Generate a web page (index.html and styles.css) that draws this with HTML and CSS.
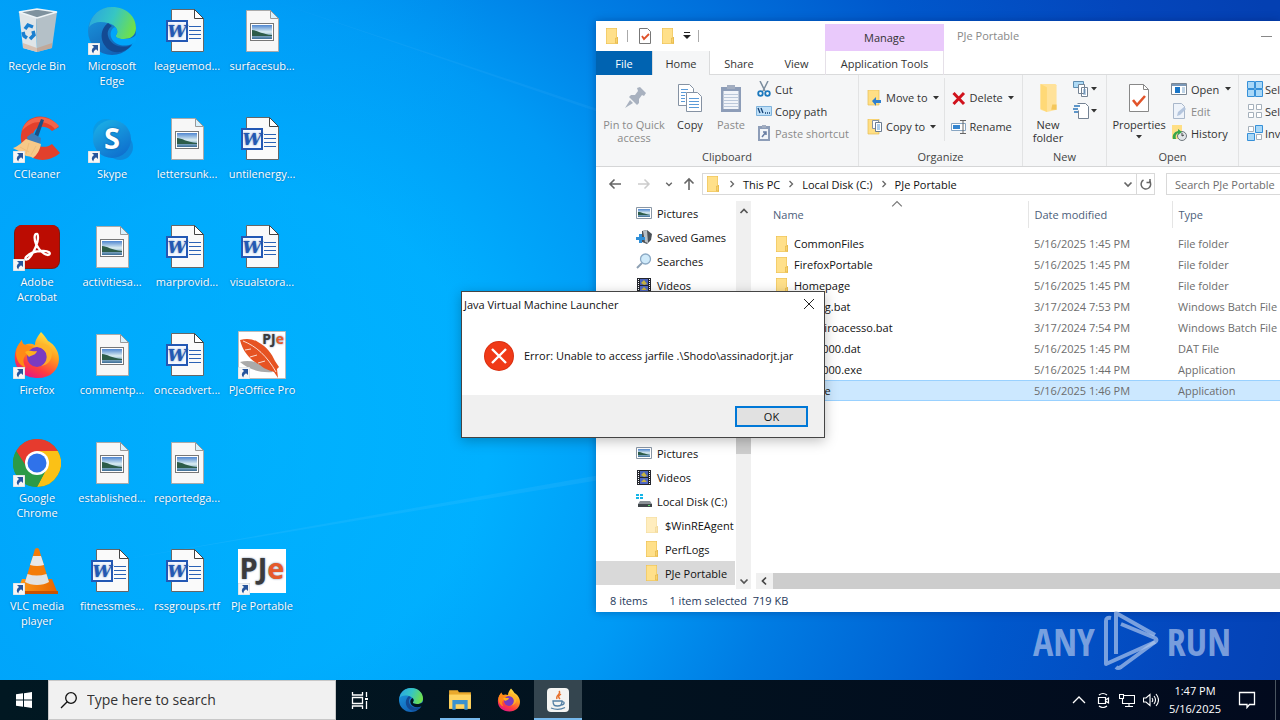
FILE: index.html
```html
<!DOCTYPE html>
<html lang="en">
<head>
<meta charset="utf-8">
<title>Desktop</title>
<link rel="stylesheet" href="styles.css">
</head>
<body>
<svg class="defs" aria-hidden="true">
  <defs>
    <linearGradient id="g-edge1" x1="0" y1="0.2" x2="1" y2="0.5"><stop offset="0" stop-color="#2aa6e0"/><stop offset="0.5" stop-color="#36c6c4"/><stop offset="1" stop-color="#6fe04a"/></linearGradient>
    <linearGradient id="g-edge2" x1="0" y1="0" x2="0.6" y2="1"><stop offset="0" stop-color="#1b9de2"/><stop offset="1" stop-color="#1260b4"/></linearGradient>
    <linearGradient id="g-skype" x1="0" y1="0" x2="0.6" y2="1"><stop offset="0" stop-color="#1cb4e8"/><stop offset="1" stop-color="#0f72cf"/></linearGradient>
    <linearGradient id="g-fox" x1="0.8" y1="0" x2="0.3" y2="1"><stop offset="0" stop-color="#fff04c"/><stop offset="0.4" stop-color="#ffa01e"/><stop offset="0.75" stop-color="#ff3d3f"/><stop offset="1" stop-color="#e3158a"/></linearGradient>
    <linearGradient id="g-sky" x1="0" y1="0" x2="0" y2="1"><stop offset="0" stop-color="#4f86d0"/><stop offset="0.5" stop-color="#dceef2"/><stop offset="0.65" stop-color="#a8c8d8"/><stop offset="1" stop-color="#3a6c96"/></linearGradient>
    <linearGradient id="g-cone" x1="0" y1="0" x2="1" y2="0"><stop offset="0" stop-color="#ff9c1a"/><stop offset="1" stop-color="#e86400"/></linearGradient>
  </defs>
  <symbol id="arrow" viewBox="0 0 12 12"><path d="M0 0h12v12H0z" fill="#f6f6f6" stroke="#b9c4cc" stroke-width=".6"/><path d="M4 2h6v6L8 6.300Q5.500 7.500 5.200 10.500Q2 7 6 4z" fill="#27559c"/></symbol>
  <symbol id="bin" viewBox="0 0 48 48"><path d="M6 5l17 5 1 35-14-4z" fill="#dfe5e8"/><path d="M23 10l21-5-5 36-15 4z" fill="#b4c0c7"/><path d="M6 5l18-3 20 3-20 6z" fill="#7f929e" stroke="#eef4f7" stroke-width="1.500"/><path d="M10 36l14 5v4l-14-4z" fill="#d8c2b4"/><path d="M24 41l15-5v5l-15 4z" fill="#c0a99b"/><g fill="none" stroke="#1a7fd0" stroke-width="3.500"><path d="M12 22l3-4 5 2"/><path d="M20 24l1 4-4 4"/><path d="M14 31l-3-2-1-4"/></g></symbol>
  <symbol id="edge" viewBox="0 0 48 48"><circle cx="24" cy="24" r="24" fill="url(#g-edge2)"/><path d="M1 20C3 8 12 0 24 0c15 0 24 10 24 21 0 8-6 11-12 11-7 0-9-2-8-4 3-3 1-10-8-12C12 14 5 15 1 20z" fill="url(#g-edge1)"/><path d="M20 16c-8 6-9 18 0 26 8 6 18 3 24-4-12 5-22-1-24-9-1-5 1-8 4-10z" fill="#134a93"/><path d="M27 20c3 3 3 6 1 8-1 2 2 4 8 4 5 0 9-1 12-4v6l-4 3c-9 4-19 0-21-7-1-4 0-8 4-10z" fill="var(--hole, #00a5fa)"/></symbol>
  <symbol id="ccleaner" viewBox="0 0 48 48"><path d="M46 12C36-4 10-2 8 20c-2 20 20 34 39 18l-8-9c-8 6-19 2-19-8 0-9 11-13 19-5z" fill="#e2402c"/><path d="M9 16C12 2 32-4 46 11l-4 3C32 3 17 6 9 16z" fill="#f2644a"/><path d="M28 4l3 1-7 20-4-2z" fill="#1d4f83"/><path d="M14 22l5-4 9 5-1 7-11 1z" fill="#3d7db9"/><path d="M0 33c6-2 9-6 13-9l15 5c-1 6-4 11-8 14-5-3-8-1-12-5-2-3-5-3-8-5z" fill="#f6c988"/><path d="M7 32l9 5m0-9l-3 11m10-8l-5 9" stroke="#eebd7c" fill="none"/></symbol>
  <symbol id="skype" viewBox="0 0 48 48"><circle cx="18" cy="17" r="13" fill="#0b9be4"/><circle cx="32" cy="32" r="13" fill="#0d8adc"/><circle cx="24" cy="24" r="19" fill="url(#g-skype)"/></symbol>
  <symbol id="acrobat" viewBox="0 0 48 48"><rect x="1" y="2" width="46" height="44" rx="8" fill="#7d1a10"/><rect x="2" y="2" width="44" height="43" rx="7" fill="#bb0c02"/><path d="M24 11c-3-1-3 5-1 10 3 6 8 11 12 11 4-1 1-5-7-4-6 0-12 3-15 6-2 3 1 4 4 0 4-5 8-14 8-19 0-2 0-4-1-4z" fill="none" stroke="#fff" stroke-width="2.300"/></symbol>
  <symbol id="firefox" viewBox="0 0 48 48"><path d="M28 1c3 3 5 6 7 9 4 2 8 6 10 12 4 13-5 25-20 25C10 47 0 37 2 23c1-6 3-9 7-14 0 3 1 4 3 5 4-2 7-1 10 0 0-5 3-9 6-13z" fill="url(#g-fox)"/><path d="M3 22c0-5 2-8 6-13 0 4 2 5 5 5l9 3c-2 4-6 4-9 6-5 4-4 9-1 14C7 35 3 29 3 22z" fill="#ff8a16"/><circle cx="24" cy="26" r="10" fill="#7a3bc0"/><path d="M17 18c4-3 12-3 16 4 2 6-1 11-5 13 8-1 13-8 10-17-3-6-9-6-15-4z" fill="#ffb52a" opacity=".8"/><path d="M12 21c4-3 7 0 12-1-1 4-5 4-8 6z" fill="#ffb01c"/></symbol>
  <symbol id="chrome" viewBox="0 0 48 48"><circle cx="24" cy="24" r="24" fill="#2c9a48"/><path d="M3.200 12A24 24 0 0 1 44.800 12L24 13 15 30z" fill="#e63b2e"/><path d="M44.800 12A24 24 0 0 1 24 48L33.500 30 24 12z" fill="#fbc116"/><path d="M3.200 12L14 30l10 6 9-5-9 17A24 24 0 0 1 3.200 12z" fill="#2c9a48"/><circle cx="24" cy="24" r="12" fill="#fff"/><circle cx="24" cy="24" r="9.500" fill="#2f72ea"/></symbol>
  <symbol id="vlc" viewBox="0 0 48 48"><path d="M9 32h30l6 15H3z" fill="url(#g-cone)"/><path d="M3 44h42v3H3z" fill="#c95200"/><path d="M22 2q2-2 4 0l10 33c-5 4-19 4-24 0z" fill="#f47c08"/><path d="M20 9h8l3 9q-7 2-14 0z" fill="#e8e8e8"/><path d="M14.500 27q9 3 19 0l2.500 8c-6 4-18 4-24 0z" fill="#e2e2e2"/></symbol>
  <symbol id="word" viewBox="0 0 48 48"><path d="M8.500 2.500h23l9 9v33h-32z" fill="#fafafa" stroke="#666"/><path d="M31.500 2.500v9h9z" fill="#fff" stroke="#444"/><path d="M26 19.500h12M26 23.500h12M26 27.500h12M26 31.500h12" stroke="#2b62b5"/><rect x="4" y="14" width="20" height="20" fill="#f4f8ff" stroke="#2358b4" stroke-width="2"/></symbol>
  <symbol id="image" viewBox="0 0 48 48"><path d="M8.500 3.500h24l8 8v33h-32z" fill="#f7f7f7" stroke="#aaa"/><path d="M32.500 3.500v8h8z" fill="#d9f1fc" stroke="#999"/><rect x="12.500" y="16.500" width="23" height="17" fill="#fff" stroke="#777"/><rect x="14" y="18" width="20" height="14" fill="url(#g-sky)"/><path d="M14 23c5 0 9 4 20 5v1H14z" fill="#2d5c49"/></symbol>
  <symbol id="pjeoffice" viewBox="0 0 48 48"><path d="M.5.500h47v47H.5z" fill="#fff" stroke="#bbb"/><path d="M2 31c12-3 24 2 33 10-12 1-24-2-33-10z" fill="#aaa"/><path d="M2 9c7-2 13-1 18 2 9 5 14 12 17 19l4 6-2 2 1 9-4-6c-5-2-10-3-14-7C12 29 5 21 2 9z" fill="#e65322"/><path d="M5 10c13 5 24 15 33 31M7 19l6-1m-1 8l7-2m1 8l7-2" stroke="#fff" stroke-width=".8" fill="none"/></symbol>
  <symbol id="folder" viewBox="0 0 16 16"><path d="M2 0h11v9h1v7H2z" fill="#e9bd4e"/><path d="M2.500.500h10v9l1 .5v5.500h-11z" fill="#ffe08a"/><path d="M11.500 10h2v5h-2z" fill="#fbd36b" stroke="#d9aa3c" stroke-width=".5"/></symbol>
  <symbol id="pic" viewBox="0 0 16 16"><path d="M.5 2.500h15v11H.5z" fill="#fff" stroke="#8a97a5"/><path d="M2 4h12v8H2z" fill="url(#g-sky)"/><path d="M2 7c4 0 6 2 12 3H2z" fill="#2d5c49"/></symbol>
  <symbol id="games" viewBox="0 0 16 16"><path d="M6 2l5-1 5 4-1 6-4 4-5-2z" fill="#4b5157"/><path d="M7 2l4-1 1 13-3-1z" fill="#b8c0c6"/><path d="M3 5h3v3h3v3H6v3H3v-3H0V8h3z" fill="#2f8fd8"/></symbol>
  <symbol id="magnify" viewBox="0 0 16 16"><path d="M1 15l5-5" stroke="#8da0b3" stroke-width="2"/><circle cx="9.500" cy="6" r="5" fill="#cfeafa" stroke="#8ba9c4" stroke-width="1.300"/></symbol>
  <symbol id="film" viewBox="0 0 16 16"><path d="M1 1h14v15H1z" fill="#23252c"/><path d="M4 2h8v6H4z" fill="#4a63ba"/><path d="M4 9h8v6H4z" fill="#5068c4"/><path d="M5 6l3-3 3 4-3 1zM5 13l3-3 3 3z" fill="#c8b340"/><path d="M2.500 2v14M13.500 2v14" stroke="#fff" stroke-dasharray="1 1"/></symbol>
  <symbol id="disk" viewBox="0 0 16 16"><path d="M0 1h3v2H0zm4 0h3v2H4zM0 4h3v2H0zm4 0h3v2H4z" fill="#15b5e8"/><path d="M4 8h10l2 3v3H2v-3z" fill="#8b9196"/><path d="M2 11h14v3H2z" fill="#3f454a"/><path d="M12 12h2v1h-2z" fill="#5fe070"/></symbol>
  <symbol id="checkdoc" viewBox="0 0 16 16"><path d="M2.500.500h8l3 3v12h-11z" fill="#fff" stroke="#777"/><path d="M5 8l2 3 5-5" fill="none" stroke="#e0522a" stroke-width="1.800"/></symbol>
  <symbol id="pin" viewBox="0 0 28 28"><g fill="#a8b1bf"><path d="M17 4l3-1 6 6-2 3-2-1-3 4v4l-2 2-8-8 2-2h4l3-4z"/><path d="M10 16l3 3-8 5z"/></g></symbol>
  <symbol id="copy" viewBox="0 0 28 30"><g fill="#fff" stroke="#8592a3"><path d="M2.500 1.500h11l4 4v17h-15z"/><path d="M10.500 9.500h11l4 4v15h-15z"/></g><path d="M5 6.500h7M5 9.500h5M5 12.500h4M5 15.500h4M5 18.500h4M13 15.500h10M13 18.500h10M13 21.500h10M13 24.500h10" stroke="#5b9bd8"/></symbol>
  <symbol id="paste" viewBox="0 0 24 30"><path d="M2 4h20v25H2z" fill="#8d9db8"/><path d="M4.500 8h15v18h-15z" fill="#f1f4f9"/><path d="M8 2h8v4H8z" fill="#a2adc0"/><path d="M5 11.500h14M5 14.500h14M5 17.500h14M5 20.500h14M5 23.500h14" stroke="#bbc8da"/></symbol>
  <symbol id="scissors" viewBox="0 0 16 16"><path d="M4 0l5 10M12 0L7 10" stroke="#7b8d9e" stroke-width="1.500"/><g fill="none" stroke="#1d79bd" stroke-width="1.800"><circle cx="4.500" cy="12.500" r="2.300"/><circle cx="11.500" cy="12.500" r="2.300"/></g></symbol>
  <symbol id="path" viewBox="0 0 16 16"><path d="M.5 3.500h15v9H.5z" fill="#bfe0f8" stroke="#7fb3dc"/><path d="M2 5l2 5M5 5l2 5M9 10h1M11 10h1M13 10h1" stroke="#123f73" stroke-width="1.300"/></symbol>
  <symbol id="pshort" viewBox="0 0 16 16"><path d="M2 1h12v15H2z" fill="#8d9db8"/><path d="M4 4h8v10H4z" fill="#f3f6fa"/><path d="M6 0h4v3H6z" fill="#a2adc0"/><path d="M6 12l4-5M7 7h3v3" stroke="#6a7fa4" fill="none" stroke-width="1.500"/></symbol>
  <symbol id="moveto" viewBox="0 0 16 16"><path d="M1 0h11v15H1z" fill="#ffdf85" stroke="#e6bd55" stroke-width=".7"/><path d="M5 11l4-4v3h5v3H9v3z" fill="#2f80d0"/></symbol>
  <symbol id="copyto" viewBox="0 0 16 16"><path d="M1 0h11v15H1z" fill="#ffdf85" stroke="#e6bd55" stroke-width=".7"/><path d="M5.500 1.500h6v8h-6z" fill="#fff" stroke="#8592a3"/><path d="M8.500 3.500h6v9h-6z" fill="#fff" stroke="#6a7b90"/><path d="M10 6h3M10 8h3M10 10h3" stroke="#5b9bd8"/></symbol>
  <symbol id="delete" viewBox="0 0 16 16"><path d="M2.500 3l10.500 11M13 3L2.500 14" stroke="#d0121c" stroke-width="3"/></symbol>
  <symbol id="rename" viewBox="0 0 16 16"><path d="M.5 4.500h14v7H.5z" fill="#fff" stroke="#87a5c2"/><path d="M2 6h7v4H2z" fill="#3485d0"/><path d="M9 1.500h6M12 1.500v13M9 14.500h6" stroke="#666" fill="none"/></symbol>
  <symbol id="bigfolder" viewBox="0 0 20 28"><path d="M3 1h14l1 1v23l-9 2-6-2z" fill="#ffe29a"/><path d="M3 1l6 3v23l-6-3z" fill="#ffd977"/><path d="M14 20h4v5h-5z" fill="#f4c75c"/></symbol>
  <symbol id="newitem" viewBox="0 0 16 16"><path d="M.5.500h10v6H.5z" fill="#aedaf5" stroke="#5f8db1"/><path d="M5.500 3.500h6v9h-6zM8.500 6.500h6v9h-6z" fill="#fff" stroke="#748293"/><path d="M10 9h3M10 11h3M10 13h3" stroke="#6a9bc8"/></symbol>
  <symbol id="easy" viewBox="0 0 16 16"><path d="M4.500.500h8l3 3v12h-10v-8" fill="#fff" stroke="#748293"/><path d="M1 3h6M0 6h5M1 9h4" stroke="#2c77ba" stroke-width="1.300"/></symbol>
  <symbol id="bigcheck" viewBox="0 0 24 30"><path d="M2.500 1.500h14l5 5v22h-19z" fill="#fff" stroke="#888"/><path d="M16.500 1.500v5h5" fill="none" stroke="#888"/><path d="M6 17l4 5 8-9" fill="none" stroke="#e2542a" stroke-width="2.600"/></symbol>
  <symbol id="open" viewBox="0 0 16 16"><path d="M.5 2.500h15v11H.5z" fill="#fff" stroke="#7b8794"/><path d="M1 3h14v2H1z" fill="#7b98b8"/><path d="M4 6h5v6H4z" fill="#1976c8"/><path d="M11 7h3M11 9h3M11 11h3" stroke="#7fa9d0"/></symbol>
  <symbol id="edit" viewBox="0 0 16 16"><path d="M2.500.500h8l3 3v12h-11z" fill="#eef3fa" stroke="#a9b7ca"/><path d="M6 13l1-4 6-5 2 2-6 6z" fill="#b4c5dd"/></symbol>
  <symbol id="history" viewBox="0 0 16 16"><path d="M1 0h10v14H1z" fill="#ffdf85"/><circle cx="11" cy="11" r="4.500" fill="#e1e5e8" stroke="#6f777d"/><path d="M11 8v3l2-1" stroke="#444" fill="none"/><path d="M2 14c-1-4 1-7 5-8V4l4 3-4 3V8c-2 1-3 3-2 6z" fill="#39a64b"/></symbol>
  <symbol id="selall" viewBox="0 0 16 16"><g fill="#a9d8f8" stroke="#3690d8"><path d="M.5.500h7v7h-7zM8.500.500h7v7h-7zM.5 8.500h7v7h-7zM8.500 8.500h7v7h-7z"/></g></symbol>
  <symbol id="selnone" viewBox="0 0 16 16"><g fill="#fff" stroke="#a5b0bb"><path d="M1.500 1.500h5v5h-5zM9.500 1.500h5v5h-5zM1.500 9.500h5v5h-5zM9.500 9.500h5v5h-5z"/></g></symbol>
  <symbol id="selinv" viewBox="0 0 16 16"><path d="M1.500 1.500h5v5h-5zM9.500 9.500h5v5h-5z" fill="#fff" stroke="#a5b0bb"/><path d="M8.500.500h7v7h-7zM.5 8.500h7v7h-7z" fill="#a9d8f8" stroke="#3690d8"/></symbol>
  <symbol id="left" viewBox="0 0 16 16"><path d="M14 8H3M7.500 3.500L3 8l4.500 4.500" fill="none" stroke="currentColor" stroke-width="1.600"/></symbol>
  <symbol id="right" viewBox="0 0 16 16"><path d="M2 8h11M8.500 3.500L13 8l-4.500 4.500" fill="none" stroke="currentColor" stroke-width="1.500"/></symbol>
  <symbol id="up" viewBox="0 0 16 16"><path d="M8 14V3M3.500 7.500L8 3l4.500 4.500" fill="none" stroke="currentColor" stroke-width="1.600"/></symbol>
  <symbol id="chev-d" viewBox="0 0 10 10"><path d="M1.500 3.500L5 7l3.500-3.500" fill="none" stroke="currentColor" stroke-width="1.700"/></symbol>
  <symbol id="chev-u" viewBox="0 0 10 10"><path d="M1.500 7L5 3.500 8.500 7" fill="none" stroke="currentColor" stroke-width="1.700"/></symbol>
  <symbol id="chev-l" viewBox="0 0 10 10"><path d="M7 1.500L3.500 5 7 8.500" fill="none" stroke="currentColor" stroke-width="1.700"/></symbol>
  <symbol id="chev-r" viewBox="0 0 10 10"><path d="M3.500 2L6.500 5l-3 3" fill="none" stroke="currentColor" stroke-width="1.300"/></symbol>
  <symbol id="refresh" viewBox="0 0 16 16"><path d="M5.500 4a4.800 4.800 0 1 0 6 1" fill="none" stroke="currentColor" stroke-width="1.500"/><path d="M8.500 6.500h3.500V3" fill="none" stroke="currentColor" stroke-width="1.500"/></symbol>
  <symbol id="tri" viewBox="0 0 6 4"><path d="M0 0h6L3 3.500z" fill="currentColor"/></symbol>
  <symbol id="win" viewBox="0 0 16 16"><path d="M0 2.300l7-1v6.200H0zM8 1.200L16 0v7.500H8zM0 8.500h7v6.200l-7-1zM8 8.500h8V16l-8-1.200z" fill="#fff"/></symbol>
  <symbol id="explorer" viewBox="0 0 22 22"><path d="M1 2h8l1 2h11v15H1z" fill="#e9a92d"/><path d="M1 6h20v13H1z" fill="#ffd461"/><path d="M4 11h14v9h-3v-5H7v5H4z" fill="#3a92cf"/></symbol>
  <symbol id="java" viewBox="0 0 24 24"><rect x="1" y="0" width="22" height="24" rx="4" fill="#f4f4f2"/><path d="M13 3c3 3-4 4-2 8M15 6c-3 2-3 3-1 5" fill="none" stroke="#e76f2a" stroke-width="1.400"/><path d="M7 13h9c0 5-2 5-4.500 5S7 18 7 13zM16 14c3-1 3 3-1 3M5 20c4 1.500 10 1.500 14-.5" fill="none" stroke="#5480a4" stroke-width="1.300"/></symbol>
  <symbol id="taskview" viewBox="0 0 18 18"><path d="M1.500 1v3h10V1M1.500 6.500h10v6h-10zM1.500 18v-3h10v3M15.500 1v5M15.500 10v8" fill="none" stroke="#fff" stroke-width="1.300"/><path d="M14 7h3v2h-3z" fill="#fff"/></symbol>
</svg>

<main class="desktop">
  <svg class="beams" viewBox="0 0 1280 680" aria-hidden="true"><path d="M270 0L680 140 1280 340 640 123z" fill="#6cc4ff" opacity=".09"/><path d="M120 560L600 475 900 420 600 480z" fill="#8ad4ff" opacity=".1"/></svg>
  <div class="icons">
    <a class="icon" href="#"><svg class="pic"><use href="#bin"/></svg><span>Recycle Bin</span></a>
    <a class="icon" href="#"><svg class="pic"><use href="#ccleaner"/></svg><svg class="badge"><use href="#arrow"/></svg><span>CCleaner</span></a>
    <a class="icon" href="#"><svg class="pic"><use href="#acrobat"/></svg><svg class="badge"><use href="#arrow"/></svg><span>Adobe<br>Acrobat</span></a>
    <a class="icon" href="#"><svg class="pic"><use href="#firefox"/></svg><svg class="badge"><use href="#arrow"/></svg><span>Firefox</span></a>
    <a class="icon" href="#"><svg class="pic"><use href="#chrome"/></svg><svg class="badge"><use href="#arrow"/></svg><span>Google<br>Chrome</span></a>
    <a class="icon" href="#"><svg class="pic"><use href="#vlc"/></svg><svg class="badge"><use href="#arrow"/></svg><span>VLC media<br>player</span></a>
    <a class="icon" href="#"><svg class="pic"><use href="#edge"/></svg><svg class="badge"><use href="#arrow"/></svg><span>Microsoft<br>Edge</span></a>
    <a class="icon" href="#"><svg class="pic" viewBox="0 0 48 48"><use href="#skype"/><text x="24" y="34" text-anchor="middle" class="t-skype">S</text></svg><svg class="badge"><use href="#arrow"/></svg><span>Skype</span></a>
    <a class="icon" href="#"><svg class="pic"><use href="#image"/></svg><span>activitiesa...</span></a>
    <a class="icon" href="#"><svg class="pic"><use href="#image"/></svg><span>commentp...</span></a>
    <a class="icon" href="#"><svg class="pic"><use href="#image"/></svg><span>established...</span></a>
    <a class="icon" href="#"><svg class="pic" viewBox="0 0 48 48"><use href="#word"/><text x="14" y="30" text-anchor="middle" class="t-word">W</text></svg><span>fitnessmes...</span></a>
    <a class="icon" href="#"><svg class="pic" viewBox="0 0 48 48"><use href="#word"/><text x="14" y="30" text-anchor="middle" class="t-word">W</text></svg><span>leaguemod...</span></a>
    <a class="icon" href="#"><svg class="pic"><use href="#image"/></svg><span>lettersunk...</span></a>
    <a class="icon" href="#"><svg class="pic" viewBox="0 0 48 48"><use href="#word"/><text x="14" y="30" text-anchor="middle" class="t-word">W</text></svg><span>marprovid...</span></a>
    <a class="icon" href="#"><svg class="pic" viewBox="0 0 48 48"><use href="#word"/><text x="14" y="30" text-anchor="middle" class="t-word">W</text></svg><span>onceadvert...</span></a>
    <a class="icon" href="#"><svg class="pic"><use href="#image"/></svg><span>reportedga...</span></a>
    <a class="icon" href="#"><svg class="pic" viewBox="0 0 48 48"><use href="#word"/><text x="14" y="30" text-anchor="middle" class="t-word">W</text></svg><span>rssgroups.rtf</span></a>
    <a class="icon" href="#"><svg class="pic"><use href="#image"/></svg><span>surfacesub...</span></a>
    <a class="icon" href="#"><svg class="pic" viewBox="0 0 48 48"><use href="#word"/><text x="14" y="30" text-anchor="middle" class="t-word">W</text></svg><span>untilenergy...</span></a>
    <a class="icon" href="#"><svg class="pic" viewBox="0 0 48 48"><use href="#word"/><text x="14" y="30" text-anchor="middle" class="t-word">W</text></svg><span>visualstora...</span></a>
    <a class="icon" href="#"><svg class="pic" viewBox="0 0 48 48"><use href="#pjeoffice"/><text x="46" y="13" text-anchor="end" class="t-pje-s">PJ<tspan class="t-orange">e</tspan></text></svg><svg class="badge"><use href="#arrow"/></svg><span>PJeOffice Pro</span></a>
    <a class="icon last-row" href="#"><svg class="pic" viewBox="0 0 48 48"><path d="M0 2h48v44H0z" fill="#fff"/><text x="24" y="32" text-anchor="middle" class="t-pje">PJ<tspan class="t-orange">e</tspan></text></svg><svg class="badge"><use href="#arrow"/></svg><span>PJe Portable</span></a>
  </div>

  <section class="explorer" aria-label="PJe Portable">
    <header class="titlebar">
      <div class="quick">
        <svg class="i16"><use href="#folder"/></svg><i class="bar"></i><svg class="i16"><use href="#checkdoc"/></svg><svg class="i16"><use href="#folder"/></svg><svg class="i8" viewBox="0 0 8 8"><path d="M1 .5h6" stroke="#222"/><path d="M0 3h8L4 7z" fill="#222"/></svg><i class="bar"></i>
      </div>
      <div class="manage">Manage</div>
      <h1>PJe Portable</h1>
      <button class="min" aria-label="Minimize"></button>
    </header>
    <nav class="tabs">
      <button class="tab file">File</button><button class="tab home">Home</button><button class="tab">Share</button><button class="tab view">View</button><button class="tab tools">Application Tools</button>
    </nav>
    <div class="ribbon">
      <div class="group clipboard">
        <div class="body">
          <button class="big dim wide"><svg class="b-icon"><use href="#pin"/></svg>Pin to Quick<br>access</button>
          <button class="big mid"><svg class="b-icon"><use href="#copy"/></svg>Copy</button>
          <button class="big dim"><svg class="b-icon"><use href="#paste"/></svg>Paste</button>
          <div class="stack">
            <button class="small"><svg class="i16"><use href="#scissors"/></svg>Cut</button>
            <button class="small"><svg class="i16"><use href="#path"/></svg>Copy path</button>
            <button class="small dim"><svg class="i16"><use href="#pshort"/></svg>Paste shortcut</button>
          </div>
        </div>
        <div class="g-label">Clipboard</div>
      </div>
      <div class="group organize">
        <div class="body">
          <div class="stack two">
            <button class="small"><svg class="i16"><use href="#moveto"/></svg>Move to<svg class="tri"><use href="#tri"/></svg></button>
            <button class="small"><svg class="i16"><use href="#copyto"/></svg>Copy to<svg class="tri"><use href="#tri"/></svg></button>
          </div>
          <div class="stack two split">
            <button class="small"><svg class="i16"><use href="#delete"/></svg>Delete<svg class="tri"><use href="#tri"/></svg></button>
            <button class="small"><svg class="i16"><use href="#rename"/></svg>Rename</button>
          </div>
        </div>
        <div class="g-label">Organize</div>
      </div>
      <div class="group new">
        <div class="body">
          <button class="big"><svg class="b-icon"><use href="#bigfolder"/></svg>New<br>folder</button>
          <div class="stack">
            <button class="small" aria-label="New item"><svg class="i16"><use href="#newitem"/></svg><svg class="tri"><use href="#tri"/></svg></button>
            <button class="small" aria-label="Easy access"><svg class="i16"><use href="#easy"/></svg><svg class="tri"><use href="#tri"/></svg></button>
          </div>
        </div>
        <div class="g-label">New</div>
      </div>
      <div class="group openg">
        <div class="body">
          <button class="big props"><svg class="b-icon"><use href="#bigcheck"/></svg>Properties<svg class="tri"><use href="#tri"/></svg></button>
          <div class="stack">
            <button class="small"><svg class="i16"><use href="#open"/></svg>Open<svg class="tri"><use href="#tri"/></svg></button>
            <button class="small dim"><svg class="i16"><use href="#edit"/></svg>Edit</button>
            <button class="small"><svg class="i16"><use href="#history"/></svg>History</button>
          </div>
        </div>
        <div class="g-label">Open</div>
      </div>
      <div class="group select">
        <div class="body">
          <div class="stack">
            <button class="small"><svg class="i16"><use href="#selall"/></svg>Select all</button>
            <button class="small"><svg class="i16"><use href="#selnone"/></svg>Select none</button>
            <button class="small"><svg class="i16"><use href="#selinv"/></svg>Invert selection</button>
          </div>
        </div>
      </div>
    </div>
    <div class="address">
      <button class="nav-btn" aria-label="Back"><svg class="i16"><use href="#left"/></svg></button>
      <button class="nav-btn off" aria-label="Forward"><svg class="i16"><use href="#right"/></svg></button>
      <button class="nav-btn tiny" aria-label="Recent"><svg class="i8"><use href="#chev-d"/></svg></button>
      <button class="nav-btn parent" aria-label="Up"><svg class="i16"><use href="#up"/></svg></button>
      <div class="crumbs">
        <svg class="i16"><use href="#folder"/></svg><svg class="i10"><use href="#chev-r"/></svg><a href="#">This PC</a><svg class="i10"><use href="#chev-r"/></svg><a href="#">Local Disk (C:)</a><svg class="i10"><use href="#chev-r"/></svg><a href="#">PJe Portable</a>
        <svg class="i10 drop"><use href="#chev-d"/></svg><button class="reload" aria-label="Refresh"><svg class="i16"><use href="#refresh"/></svg></button>
      </div>
      <input class="find" type="text" placeholder="Search PJe Portable" aria-label="Search PJe Portable">
    </div>
    <div class="panes">
      <ul class="tree">
        <li><svg class="i16"><use href="#pic"/></svg>Pictures</li>
        <li><svg class="i16"><use href="#games"/></svg>Saved Games</li>
        <li><svg class="i16"><use href="#magnify"/></svg>Searches</li>
        <li><svg class="i16"><use href="#film"/></svg>Videos</li>
        <li class="gap" aria-hidden="true"></li>
        <li><svg class="i16"><use href="#pic"/></svg>Pictures</li>
        <li><svg class="i16"><use href="#film"/></svg>Videos</li>
        <li><svg class="i16"><use href="#disk"/></svg>Local Disk (C:)</li>
        <li class="sub"><svg class="i16 faint"><use href="#folder"/></svg>$WinREAgent</li>
        <li class="sub"><svg class="i16"><use href="#folder"/></svg>PerfLogs</li>
        <li class="sub on"><svg class="i16"><use href="#folder"/></svg>PJe Portable</li>
      </ul>
      <div class="vscroll"><svg class="i10"><use href="#chev-u"/></svg><i></i><svg class="i10"><use href="#chev-d"/></svg></div>
      <div class="files">
        <table>
          <thead><tr><th class="c-name">Name<svg class="sort" viewBox="0 0 10 10"><path d="M1 7l4-4 4 4" fill="none" stroke="#777"/></svg></th><th class="c-date">Date modified</th><th>Type</th></tr></thead>
          <tbody>
            <tr><td><svg class="i16"><use href="#folder"/></svg>CommonFiles</td><td>5/16/2025 1:45 PM</td><td>File folder</td></tr>
            <tr><td><svg class="i16"><use href="#folder"/></svg>FirefoxPortable</td><td>5/16/2025 1:45 PM</td><td>File folder</td></tr>
            <tr><td><svg class="i16"><use href="#folder"/></svg>Homepage</td><td>5/16/2025 1:45 PM</td><td>File folder</td></tr>
            <tr><td><svg class="i16"></svg>catalog.bat</td><td>3/17/2024 7:53 PM</td><td>Windows Batch File</td></tr>
            <tr><td><svg class="i16"></svg>primeiroacesso.bat</td><td>3/17/2024 7:54 PM</td><td>Windows Batch File</td></tr>
            <tr><td><svg class="i16"></svg>unins000.dat</td><td>5/16/2025 1:45 PM</td><td>DAT File</td></tr>
            <tr><td><svg class="i16"></svg>unins000.exe</td><td>5/16/2025 1:44 PM</td><td>Application</td></tr>
            <tr class="on"><td><svg class="i16"></svg>PJe.exe</td><td>5/16/2025 1:46 PM</td><td>Application</td></tr>
          </tbody>
        </table>
        <div class="hscroll"><svg class="i10"><use href="#chev-l"/></svg><i></i></div>
      </div>
    </div>
    <footer class="status"><span>8 items</span><span>1 item selected&nbsp; 719 KB</span></footer>
  </section>

  <section class="dialog" role="dialog" aria-labelledby="dlg-title">
    <header><h2 id="dlg-title">Java Virtual Machine Launcher</h2><button class="close" aria-label="Close"><svg viewBox="0 0 12 12"><path d="M1 1l10 10M11 1L1 11" stroke="#222"/></svg></button></header>
    <div class="message"><svg viewBox="0 0 30 30"><circle cx="15" cy="15" r="15" fill="#d92f10"/><circle cx="15" cy="15" r="14" fill="#f03a17"/><path d="M8 8l14 14M22 8L8 22" stroke="#fff" stroke-width="2.400"/></svg><p>Error: Unable to access jarfile .\Shodo\assinadorjt.jar</p></div>
    <footer><button class="ok">OK</button></footer>
  </section>

  <div class="watermark"><span>ANY</span><svg viewBox="0 0 56 60"><g fill="none" stroke="currentColor" stroke-width="4" stroke-linejoin="round"><path d="M8 7q-5-1-5 3v43l49-22q3-2 0-4L18 13"/><path d="M13 43V2l39 22M13 56q2 2 5 0l34-25"/></g></svg><span>RUN</span></div>
</main>

<footer class="taskbar">
  <button class="start" aria-label="Start"><svg class="i16"><use href="#win"/></svg></button>
  <label class="search"><svg viewBox="0 0 18 18"><circle cx="11" cy="7" r="5.300" fill="none" stroke="#111" stroke-width="1.300"/><path d="M7.200 10.800L1 17" stroke="#111" stroke-width="1.300"/></svg><input type="text" placeholder="Type here to search" aria-label="Type here to search"></label>
  <button class="task tv" aria-label="Task View"><svg class="i18"><use href="#taskview"/></svg></button>
  <button class="task dark" aria-label="Edge"><svg class="i24"><use href="#edge"/></svg></button>
  <button class="task run" aria-label="File Explorer"><svg class="i24"><use href="#explorer"/></svg></button>
  <button class="task" aria-label="Firefox"><svg class="i24"><use href="#firefox"/></svg></button>
  <button class="task active" aria-label="Java"><svg class="i24"><use href="#java"/></svg></button>
  <div class="tray">
    <svg class="i16" viewBox="0 0 16 16"><path d="M2 11l6-6 6 6" fill="none" stroke="#fff" stroke-width="1.300"/></svg>
    <svg class="i16" viewBox="0 0 16 16"><path d="M3.500 5.500h7v6h-7zM10.500 8l3-2v5l-3-2M4 3q4-3 8 0M4 14q4 3 8 0" fill="none" stroke="#fff" stroke-width="1.200"/></svg>
    <svg class="i16" viewBox="0 0 16 16"><path d="M5 3.500h10.500v8H3.500V7M10 11.500v3M6 14.500h8M.5 2.500h4v4h-4z" fill="none" stroke="#fff" stroke-width="1.100"/></svg>
    <svg class="i16" viewBox="0 0 16 16"><path d="M.5 6v4H3l4 3.500v-11L3 6zM9 6q1.500 2 0 4M11 4q3 4 0 8M13 2q5 6 0 12" fill="none" stroke="#fff" stroke-width="1.100"/></svg>
    <time>1:47 PM<br>5/16/2025</time>
    <svg class="note" viewBox="0 0 18 18"><path d="M1.500 1.500h15v12h-5l-2.500 3v-3H1.500z" fill="none" stroke="#fff" stroke-width="1.300"/></svg>
    <i class="peek"></i>
  </div>
</footer>
</body>
</html>
```
FILE: styles.css
```css
* { box-sizing: border-box; }
html, body { height: 100%; }
body {
  margin: 0;
  display: flex;
  flex-direction: column;
  overflow: hidden;
  font: 11px/15px "Open Sans", "Noto Sans", sans-serif;
  color: #111;
}
button, input { font: inherit; color: inherit; border: 0; margin: 0; padding: 0; background: none; border-radius: 0; }
a { color: inherit; text-decoration: none; }
h1, h2, p, ul { margin: 0; padding: 0; font: inherit; }
svg { flex: none; display: block; }
.defs { position: absolute; width: 0; height: 0; }
.i8 { width: 8px; height: 8px; }
.i10 { width: 10px; height: 10px; }
.i16 { width: 16px; height: 16px; }
.i18 { width: 18px; height: 18px; }
.i24 { width: 24px; height: 24px; }
.tri { width: 6px; height: 4px; }

.t-skype { font: bold 29px "Open Sans", sans-serif; fill: #fff; }
.t-word { font: italic bold 17px "DejaVu Serif", serif; fill: #2358b4; }
.t-pje { font: bold 29px "Open Sans", sans-serif; fill: #3b3b3d; }
.t-pje-s { font: bold 14px "Open Sans", sans-serif; fill: #3b3b3d; }
.t-orange { fill: #e65a2b; }

/* Desktop */
.desktop {
  position: relative;
  flex: 1;
  min-height: 0;
  overflow: hidden;
  background:
    linear-gradient(90deg, rgba(0, 166, 251, .8), rgba(0, 166, 251, 0) 38%),
    radial-gradient(circle at 250px 430px, #00b6ff 0, #00b0ff 240px, #009af5 410px, #007ce3 550px, #0058cc 770px, #0446bc 970px, #0440b2 1100px);
}
.beams { position: absolute; inset: 0; width: 100%; height: 100%; }
.icons {
  position: relative;
  display: grid;
  grid-auto-flow: column;
  grid-template-rows: repeat(6, 108px);
  grid-auto-columns: 75px;
  justify-content: start;
}
.icon { position: relative; display: flex; flex-direction: column; align-items: center; padding-top: 7px; padding-right: 1px; color: #fff; text-align: center; white-space: nowrap; text-shadow: 0 0 2px rgba(0, 50, 110, .6); }
.icon .pic { width: 48px; height: 48px; }
.icon span { margin-top: 3px; }
.badge { position: absolute; left: 13px; top: 43px; width: 12px; height: 12px; }
.last-row { grid-row: 6; }

/* Explorer window */
.explorer { position: absolute; left: 596px; right: 0; top: 21px; background: #fff; overflow: hidden; box-shadow: 0 0 8px rgba(0, 20, 80, .35); }
.titlebar { display: flex; height: 30px; align-items: stretch; }
.quick { width: 229px; display: flex; align-items: center; gap: 7px; padding-left: 8px; }
.bar { width: 1px; height: 12px; background: #aaa; margin-right: 2px; }
.manage { width: 119px; margin-top: 3px; line-height: 28px; text-align: center; background: #e9c9fb; color: #333; }
.titlebar h1 { flex: 1; padding-left: 13px; line-height: 30px; color: #888; }
.min { width: 28px; display: flex; align-items: center; }
.min::before { content: ""; width: 11px; height: 1px; margin-left: 9px; background: #888; }
.tabs { display: flex; height: 24px; border-bottom: 1px solid #dadbdc; }
.tab { width: 58px; height: 24px; color: #333; white-space: nowrap; }
.file { width: 56px; background: #0063b1; color: #fff; }
.home { background: #f5f6f7; border: 1px solid #dadbdc; border-width: 0 1px; }
.view { width: 57px; }
.tools { width: 119px; border: 1px solid #e5e0e8; border-width: 0 1px; }
.ribbon { display: flex; height: 92px; background: #f5f6f7; border-bottom: 1px solid #d5d6d7; color: #333; }
.group { flex: none; display: flex; flex-direction: column; border-right: 1px solid #e2e3e4; padding-top: 3px; }
.clipboard { width: 263px; }
.organize { width: 164px; }
.new { width: 84px; }
.openg { width: 132px; }
.body { flex: 1; display: flex; align-items: flex-start; }
.g-label { text-align: center; height: 17px; color: #444; }
.big { width: 46px; line-height: 13px; padding-top: 5px; white-space: nowrap; text-align: center; }
.wide { width: 76px; }
.mid { width: 36px; }
.b-icon { width: 28px; height: 30px; margin: 0 auto 5px; }
.dim { color: #8a8a8a; }
.stack { display: flex; flex-direction: column; align-items: flex-start; }
.small { display: flex; align-items: center; gap: 4px; height: 22px; white-space: nowrap; }
.small .tri { margin-left: 2px; }
.clipboard .small { gap: 3px; }
.clipboard .stack { margin-left: 2px; }
.organize .small { gap: 3px; }
.organize .stack { margin-left: 8px; }
.two { padding-top: 5px; }
.two .small { height: 29px; }
.organize .split { margin-left: 5px; padding-left: 6px; border-left: 1px solid #e2e3e4; }
.new .big { width: 50px; }
.new .small { gap: 0; }
.props { width: 64px; }
.props .tri { margin: 4px auto 0; }
.select { border: 0; padding-left: 8px; }
.select .small { gap: 2px; }

.address { display: flex; align-items: center; height: 34px; padding-left: 11px; color: #222; }
.nav-btn { color: #666; width: 16px; margin-right: 13px; display: flex; justify-content: center; }
.off { color: #ccc; }
.tiny { width: 8px; margin-right: 8px; }
.parent { margin-right: 5px; }
.crumbs { flex: 0 0 453px; height: 22px; display: flex; align-items: center; gap: 6px; padding-left: 2px; border: 1px solid #d9d9d9; white-space: nowrap; color: #111; }
.crumbs svg { color: #666; }
.crumbs .drop { margin-left: auto; margin-right: -3px; }
.reload { height: 20px; width: 18px; border-left: 1px solid #d9d9d9; display: flex; align-items: center; justify-content: center; }
.find { flex: 1; min-width: 0; height: 22px; margin-left: 11px; padding-left: 8px; border: 1px solid #d9d9d9; border-right: 0; }
.find::placeholder { color: #6d6d6d; opacity: 1; }

.panes { display: flex; }
.tree { flex: 0 0 140px; min-width: 0; list-style: none; padding-bottom: 4px; }
.tree li { display: flex; align-items: center; gap: 5px; height: 24px; padding-left: 40px; margin-right: 1px; white-space: nowrap; overflow: hidden; }
.tree .sub { padding-left: 48px; }
.tree .gap { height: 144px; }
.tree .on { background: #d9d9d9; }
.faint { opacity: .55; }
.vscroll { flex: 0 0 15px; display: flex; flex-direction: column; align-items: center; padding: 5px 0 3px; background: #f0f0f0; color: #555; }
.vscroll i { width: 15px; height: 140px; margin: auto 0 122px; background: #cdcdcd; }
.files { flex: 1; min-width: 0; display: flex; flex-direction: column; padding-left: 5px; }
table { width: 100%; border-collapse: collapse; table-layout: fixed; margin-left: 11px; }
th { height: 27px; padding: 0 6px; text-align: left; font-weight: normal; color: #4c607a; border-right: 1px solid #e5e5e5; white-space: nowrap; }
th:last-child { border: 0; }
.c-name { width: 261px; position: relative; }
.c-date { width: 144px; }
.sort { position: absolute; left: 124px; top: -3px; width: 12px; height: 12px; }
tbody::before { content: ""; display: block; height: 5px; }
td { height: 21px; padding: 0 6px; color: #6d6d6d; white-space: nowrap; }
td:first-child { display: flex; align-items: center; gap: 4px; padding-left: 7px; color: #111; }
tr.on { background: #cce8ff; box-shadow: inset 0 0 0 1px #99d1ff; }
.hscroll { margin-top: auto; height: 16px; display: flex; align-items: center; background: #f0f0f0; color: #444; padding-left: 3px; gap: 4px; }
.hscroll i { flex: 1; height: 16px; background: #cdcdcd; }
.status { display: flex; gap: 22px; height: 23px; line-height: 23px; padding-left: 14px; color: #1e395b; }

/* Message box */
.dialog { position: absolute; left: 461px; top: 291px; width: 364px; background: #fff; border: 1px solid #444; box-shadow: 0 3px 12px rgba(0, 0, 0, .25); color: #111; }
.dialog header { display: flex; justify-content: space-between; align-items: center; height: 24px; padding: 0 9px 0 2px; }
.close svg { width: 12px; height: 12px; }
.message { display: flex; align-items: center; gap: 10px; height: 79px; padding-left: 22px; }
.message svg { width: 30px; height: 30px; }
.dialog footer { display: flex; justify-content: flex-end; padding: 11px 16px 10px; background: #f0f0f0; }
.ok { width: 73px; height: 21px; background: #e1e1e1; border: 2px solid #0078d7; }

.watermark { position: absolute; right: 49px; bottom: 9px; display: flex; align-items: center; gap: 8px; color: rgba(173, 196, 235, .7); font: 300 38px/60px "Open Sans Condensed", "Roboto Condensed", "Liberation Sans Narrow", Lato, sans-serif; }
.watermark svg { width: 56px; height: 60px; }

/* Taskbar */
.taskbar { flex: none; height: 40px; display: flex; background: linear-gradient(90deg, #011822, #02121f 50%, #020a1e); color: #fff; }
.start { width: 48px; display: flex; align-items: center; justify-content: center; }
.search { width: 288px; display: flex; align-items: center; gap: 9px; padding-left: 11px; background: #f1f1f1; border: 1px solid #c8c8c8; }
.search svg { width: 18px; height: 18px; }
.search input { flex: 1; min-width: 0; font-size: 14px; line-height: 20px; color: #111; outline: 0; }
.search input::placeholder { color: #333; opacity: 1; }
.task { width: 48px; margin-right: 1px; display: flex; align-items: center; justify-content: center; }
.dark { --hole: #011620; }
.tv { margin-right: 3px; }
.run { background: linear-gradient(#76b9ed, #76b9ed) center bottom / 40px 2px no-repeat; }
.active { background: linear-gradient(#76b9ed, #76b9ed) center bottom / 48px 2px no-repeat, #34454f; }
.tray { margin-left: auto; display: flex; align-items: center; gap: 8px; }
.tray time { width: 56px; text-align: center; line-height: 18px; }
.note { width: 18px; height: 18px; margin: 0 11px 0 7px; }
.peek { width: 1px; height: 40px; margin-right: 4px; background: #4a5560; }
```
